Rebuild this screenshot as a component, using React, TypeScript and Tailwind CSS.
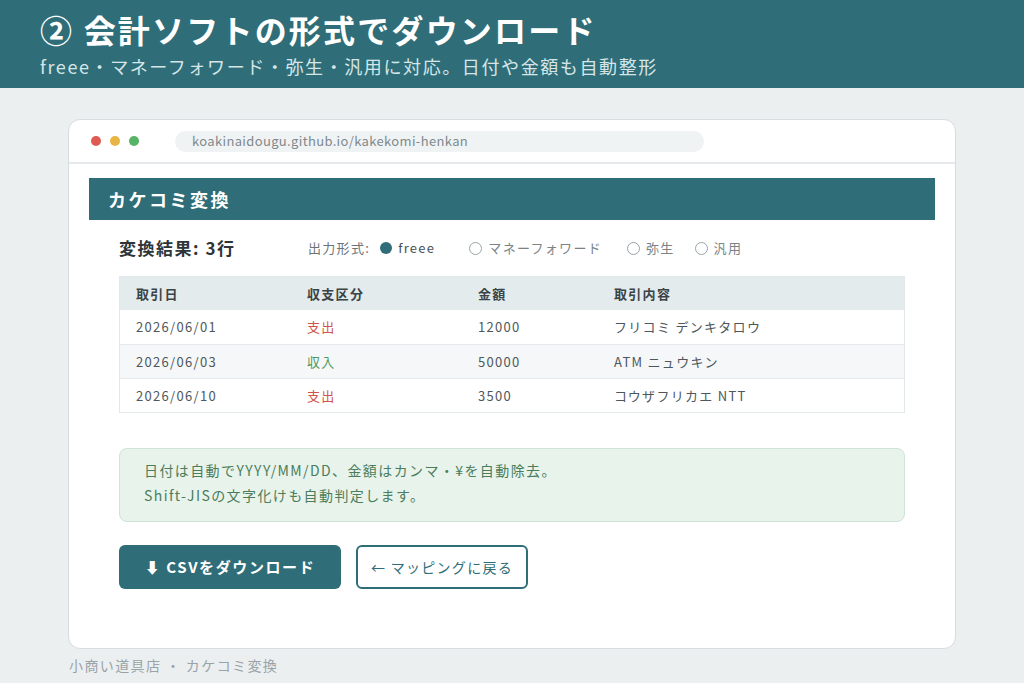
import React from "react";

const font = { fontFamily: '"Noto Sans CJK JP", "Noto Sans", sans-serif' };

function Radio({ checked, label }: { checked?: boolean; label: string }) {
  return (
    <div className="flex items-center gap-[6px]">
      {checked ? (
        <span className="w-[12px] h-[12px] rounded-full bg-[#2f6e78]" />
      ) : (
        <span className="w-[13px] h-[13px] rounded-full border-[1.5px] border-[#9aa4a8] bg-white" />
      )}
      <span className={checked ? "text-[#4a4f52]" : "text-[#7b8387]"}>{label}</span>
    </div>
  );
}

const rows = [
  { d: "2026/06/01", k: "支出", a: "12000", c: "フリコミ デンキタロウ", out: true },
  { d: "2026/06/03", k: "収入", a: "50000", c: "ATM ニュウキン", out: false },
  { d: "2026/06/10", k: "支出", a: "3500", c: "コウザフリカエ NTT", out: true },
];

export default function App() {
  return (
    <div className="w-[1024px] h-[683px] bg-[#ebeff0] overflow-hidden flex flex-col" style={font}>
      <div className="h-[88px] bg-[#2f6e78] pl-[40px] pt-[5px] flex flex-col">
        <div className="text-white text-[32px] font-bold leading-[48px] tracking-[2.2px]">② 会計ソフトの形式でダウンロード</div>
        <div className="text-[#d6e6e8] text-[18px] leading-[24px] mt-[1px] tracking-[1.6px]">freee・マネーフォワード・弥生・汎用に対応。日付や金額も自動整形</div>
      </div>
      <div className="pl-[68px] pt-[31px]">
        <div className="w-[888px] h-[530px] bg-white border border-[#d6dcdf] rounded-[12px] flex flex-col">
          <div className="h-[44px] border-b-2 border-[#e6eaec] flex items-center pl-[22px]">
            <div className="flex gap-[9px]">
              <span className="w-[10px] h-[10px] rounded-full bg-[#df5a52]" />
              <span className="w-[10px] h-[10px] rounded-full bg-[#e8b545]" />
              <span className="w-[10px] h-[10px] rounded-full bg-[#56b466]" />
            </div>
            <div className="ml-[36px] w-[529px] h-[21px] rounded-full bg-[#f0f3f4] flex items-center pl-[17px] text-[13px] text-[#80898d] tracking-[0.35px]">
              koakinaidougu.github.io/kakekomi-henkan
            </div>
          </div>
          <div className="px-5 pt-[14px]">
            <div className="h-[42px] bg-[#2f6e78] flex items-center pl-[19px] text-white text-[18px] font-bold tracking-[2.5px]">カケコミ変換</div>
            <div className="px-[30px]">
              <div className="h-[56px] flex items-center">
                <div className="w-[189px] text-[17px] font-bold text-[#2e3538] tracking-[1.5px]">変換結果: 3行</div>
                <div className="flex items-center text-[13px] text-[#6c7478] tracking-[1.3px]">
                  <span className="mr-[10px]">出力形式:</span>
                  <div className="mr-[34px]"><Radio checked label="freee" /></div>
                  <div className="mr-[25px]"><Radio label="マネーフォワード" /></div>
                  <div className="mr-[20px]"><Radio label="弥生" /></div>
                  <Radio label="汎用" />
                </div>
              </div>
              <div className="border border-[#e3e8ea] text-[13px] tracking-[1.3px]">
                <div className="h-[33px] bg-[#e3ebed] flex items-center font-bold text-[#3a4346]">
                  <div className="w-[171px] pl-[16px]">取引日</div>
                  <div className="w-[171px] pl-[16px]">収支区分</div>
                  <div className="w-[136px] pl-[16px]">金額</div>
                  <div className="pl-[16px]">取引内容</div>
                </div>
                {rows.map((r, i) => (
                  <div
                    key={i}
                    className={`h-[34px] flex items-center text-[#4e575b] ${i === 1 ? "bg-[#f5f7f8]" : "bg-white"} ${i > 0 ? "border-t border-[#e6eaec]" : ""}`}
                  >
                    <div className="w-[171px] pl-[16px]">{r.d}</div>
                    <div className={`w-[171px] pl-[16px] ${r.out ? "text-[#d0544b]" : "text-[#4f9a60]"}`}>{r.k}</div>
                    <div className="w-[136px] pl-[16px]">{r.a}</div>
                    <div className="pl-[16px]">{r.c}</div>
                  </div>
                ))}
              </div>
              <div className="mt-[35px] h-[74px] bg-[#e8f3ec] border border-[#cfe3d6] rounded-[8px] pl-[24px] pt-[9px] text-[14px] leading-[25px] text-[#4b7d5a] tracking-[1.4px]">
                <div>日付は自動でYYYY/MM/DD、金額はカンマ・¥を自動除去。</div>
                <div>Shift-JISの文字化けも自動判定します。</div>
              </div>
              <div className="mt-[23px] flex gap-[15px]">
                <div className="w-[222px] h-[44px] rounded-[6px] bg-[#2f6e78] text-white font-bold text-[15px] tracking-[1.6px] flex items-center justify-center">⬇ CSVをダウンロード</div>
                <div className="w-[172px] h-[44px] rounded-[6px] border-2 border-[#2f6e78] bg-white text-[#2f6e78] text-[14px] tracking-[1.3px] flex items-center justify-center">← マッピングに戻る</div>
              </div>
            </div>
          </div>
        </div>
        <div className="mt-[6px] text-[14px] text-[#9aa3a7] pl-[1px] tracking-[1.4px]">小商い道具店 ・ カケコミ変換</div>
      </div>
    </div>
  );
}
